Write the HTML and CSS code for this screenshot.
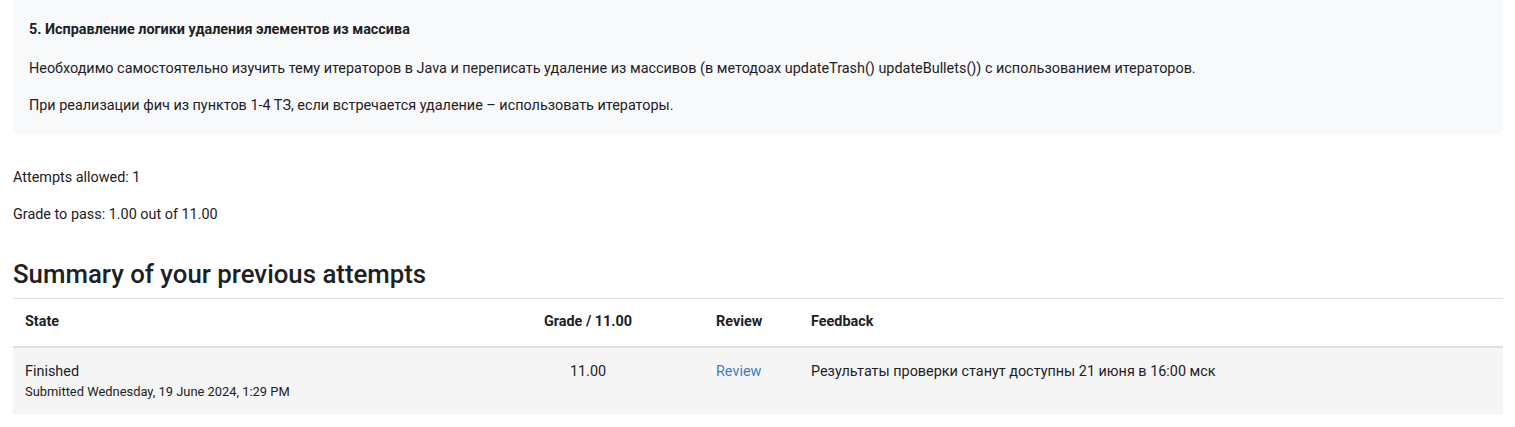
FILE: index.html
```html
<!DOCTYPE html>
<html lang="ru">
<head>
<meta charset="utf-8">
<title>Quiz</title>
<link rel="stylesheet" href="styles.css">
</head>
<body>
<div class="page">
  <div class="intro">
    <p class="task-title">5. Исправление логики удаления элементов из массива</p>
    <p>Необходимо самостоятельно изучить тему итераторов в Java и переписать удаление из массивов (в методоах updateTrash() updateBullets()) с использованием итераторов.</p>
    <p>При реализации фич из пунктов 1-4 ТЗ, если встречается удаление – использовать итераторы.</p>
  </div>
  <div class="info">
    <p>Attempts allowed: 1</p>
    <p>Grade to pass: 1.00 out of 11.00</p>
  </div>
  <h3 class="summary-title">Summary of your previous attempts</h3>
  <table class="attempts">
    <thead>
      <tr>
        <th class="c-state">State</th>
        <th class="c-grade">Grade / 11.00</th>
        <th class="c-review">Review</th>
        <th class="c-feedback">Feedback</th>
      </tr>
    </thead>
    <tbody>
      <tr>
        <td class="c-state">Finished<span class="submitted">Submitted Wednesday, 19 June 2024, 1:29 PM</span></td>
        <td class="c-grade">11.00</td>
        <td class="c-review"><a href="#">Review</a></td>
        <td class="c-feedback">Результаты проверки станут доступны 21 июня в 16:00 мск</td>
      </tr>
    </tbody>
  </table>
</div>
</body>
</html>
```
FILE: styles.css
```css
html, body {
  margin: 0;
  padding: 0;
  background: #fff;
}
body {
  font-family: Roboto, "Liberation Sans", sans-serif;
  font-size: 14.4px;
  line-height: 21.6px;
  color: #1d2125;
  overflow: hidden;
}
.page {
  padding: 0 12px 0 13px;
}
p {
  margin: 0;
}
.intro {
  background: #f8f9fa;
  border-radius: 6px;
  margin-top: -20px;
  padding: 39px 16px 17px 16px;
  display: flex;
  flex-direction: column;
  gap: 16px;
}
.intro .task-title {
  font-weight: 700;
  margin-bottom: 1px;
}
.info {
  margin-top: 33px;
  display: flex;
  flex-direction: column;
  gap: 16px;
}
.summary-title {
  margin: 33px 0 8px 0;
  font-size: 25.8px;
  font-weight: 500;
  line-height: 1.2;
}
.attempts {
  width: 100%;
  border-collapse: collapse;
  border-top: 1px solid #dee2e6;
}
.attempts th {
  font-weight: 700;
  text-align: left;
  padding: 12px 12px 13px 12px;
  border-bottom: 2px solid #dee2e6;
  vertical-align: bottom;
}
.attempts td {
  padding: 13px 12px 13px 12px;
  background: #f5f5f5;
  vertical-align: top;
  border-bottom: 1px solid #fff;
}
.attempts .c-state { width: 435px; }
.attempts .c-grade { text-align: center; width: 208px; }
.attempts .c-review { width: 71px; }
.submitted {
  display: block;
  font-size: 12.9px;
  line-height: 19px;
  margin-top: 0;
}
a {
  color: #3a7fc4;
  text-decoration: none;
}
```
